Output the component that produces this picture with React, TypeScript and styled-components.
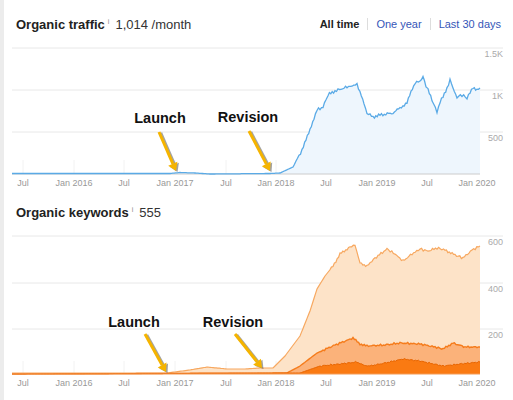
import React from "react";
import styled, { createGlobalStyle } from "styled-components";

const Global = createGlobalStyle`
  body { margin: 0; background: #fff; font-family: "Liberation Sans", Arial, sans-serif; }
`;

const Page = styled.div`
  width: 513px;
  height: 400px;
  overflow: hidden;
  border-left: 4px solid #ececec;
  box-sizing: border-box;
  position: relative;
`;

const Header = styled.div`
  display: flex;
  align-items: center;
  padding: 0 12px 0 12px;
  height: 22px;
  margin-top: ${({ $top }: { $top: number }) => $top}px;
`;

const Title = styled.span`
  font-weight: bold;
  font-size: 13px;
  color: #222;
`;

const Info = styled.span`
  font-size: 7px;
  color: #888;
  margin: -6px 6px 0 3px;
`;

const Value = styled.span`
  font-size: 13px;
  color: #333;
  flex: 1;
`;

const Tabs = styled.div`
  display: flex;
  align-items: center;
  font-size: 11px;
`;

const Tab = styled.span<{ $active?: boolean }>`
  color: ${({ $active }) => ($active ? "#222" : "#3556b8")};
  font-weight: ${({ $active }) => ($active ? "bold" : "normal")};
  padding: 0 8px;
  border-left: ${({ $active }) => ($active ? "none" : "1px solid #ddd")};
  line-height: 12px;
  &:last-child { padding-right: 0; }
`;

const Chart = styled.svg`
  display: block;
`;

const months = ["Jul", "Jan 2016", "Jul", "Jan 2017", "Jul", "Jan 2018", "Jul", "Jan 2019", "Jul", "Jan 2020"];
const mx = [23, 74, 124, 175, 226, 276, 326, 377, 427, 477];

// densify a polyline with a little deterministic noise once the series takes off
const rough = (a: number[][], amp: number, from: number, seed: number) => {
  const out: number[][] = [];
  for (let i = 0; i < a.length - 1; i++) {
    const [x1, y1] = a[i];
    const [x2, y2] = a[i + 1];
    const n = Math.max(1, Math.round((x2 - x1) / 1.5));
    for (let k = 0; k < n; k++) {
      const x = x1 + ((x2 - x1) * k) / n;
      const y = y1 + ((y2 - y1) * k) / n;
      const j = x > from ? amp * (Math.sin(x * 2.3 + seed) * 0.6 + Math.sin(x * 5.1 + seed * 2) * 0.4) : 0;
      out.push([x, +(y + j).toFixed(1)]);
    }
  }
  out.push(a[a.length - 1]);
  return out;
};

const pts = (a: number[][]) => a.map((p) => p.join(",")).join(" ");

const traffic = rough([
  [12, 173.5], [170, 173.5], [180, 172.5], [195, 173], [210, 174], [270, 173.5], [280, 173],
  [293, 167], [302, 150], [306, 140], [310, 130], [314, 118], [317, 110], [323, 107], [326, 100],
  [328, 95], [335, 91], [347, 87], [352, 86], [357, 84], [360, 92], [364, 104], [367, 113],
  [373, 117], [380, 115], [393, 113], [400, 108], [407, 103], [411, 92], [415, 83], [420, 81],
  [423, 77], [426, 86], [428, 90], [432, 100], [437, 112], [440, 102], [443, 97], [447, 88],
  [450, 80], [453, 88], [457, 97], [462, 95], [467, 98], [470, 93], [473, 87], [477, 90], [480, 88],
], 1.6, 295, 1);

const light = rough([
  [12, 377], [167, 377], [190, 374], [207, 371], [227, 373], [245, 373], [260, 372], [273, 372],
  [285, 360], [300, 340], [310, 315], [317, 293], [325, 280], [333, 270], [340, 258], [350, 251],
  [355, 249], [360, 267], [367, 270], [375, 262], [387, 253], [395, 258], [403, 265], [412, 258],
  [420, 253], [428, 255], [437, 252], [445, 254], [455, 259], [463, 262], [472, 254], [480, 250],
], 1.3, 330, 2);

const mid = rough([
  [12, 378], [287, 377], [300, 370], [317, 357], [335, 349], [353, 342], [360, 348], [367, 350],
  [385, 349], [400, 347], [420, 348], [435, 351], [443, 353], [453, 347], [465, 351], [480, 351],
], 1, 320, 3);

const dark = rough([
  [12, 378], [300, 377], [320, 370], [340, 368], [357, 366], [363, 369], [370, 370], [385, 367],
  [403, 363], [420, 365], [443, 370], [460, 368], [480, 366],
], 0.8, 320, 4);

const area = (a: number[][], base: number) =>
  `M${a[0][0]},${base} L${pts(a)} L${a[a.length - 1][0]},${base} Z`;

const Arrow = ({ x1, y1, x2, y2 }: { x1: number; y1: number; x2: number; y2: number }) => {
  const ang = Math.atan2(y2 - y1, x2 - x1);
  const l = 8;
  const w = 5;
  const bx = x2 - l * Math.cos(ang);
  const by = y2 - l * Math.sin(ang);
  const nx = -Math.sin(ang) * w;
  const ny = Math.cos(ang) * w;
  const head = `${x2},${y2} ${bx + nx},${by + ny} ${bx - nx},${by - ny}`;
  return (
    <g>
      <g transform="translate(1.5,1)" opacity="0.45">
        <line x1={x1} y1={y1} x2={bx} y2={by} stroke="#333" strokeWidth="3.5" />
        <polygon points={head} fill="#333" />
      </g>
      <line x1={x1} y1={y1} x2={bx} y2={by} stroke="#f5b400" strokeWidth="3" />
      <polygon points={head} fill="#f5b400" />
    </g>
  );
};

const Label = ({ x, y, children }: { x: number; y: number; children: string }) => (
  <text x={x} y={y} fontSize="14.5" fontWeight="bold" fill="#111" textAnchor="middle"
    fontFamily="Liberation Sans, Arial, sans-serif">{children}</text>
);

const Axis = ({ y, top }: { y: number; top: number }) => (
  <g fontSize="9" fill="#999" fontFamily="Liberation Sans, Arial, sans-serif">
    {mx.map((x, i) => (
      <g key={i}>
        <line x1={x} y1={top} x2={x} y2={y} stroke="#f2f2f2" strokeWidth="1" />
        <text x={x} y={y + 12} textAnchor="middle">{months[i]}</text>
      </g>
    ))}
  </g>
);

const YLabels = ({ items }: { items: [string, number][] }) => (
  <g fontSize="9" fill="#aaa" fontFamily="Liberation Sans, Arial, sans-serif">
    {items.map(([t, y]) => (
      <g key={t}>
        <line x1="12" y1={y} x2="503" y2={y} stroke="#e8e8e8" />
        <text x="503" y={y + 9} textAnchor="end">{t}</text>
      </g>
    ))}
  </g>
);

export default function App() {
  return (
    <Page>
      <Global />
      <Header $top={13}>
        <Title>Organic traffic</Title>
        <Info>i</Info>
        <Value>1,014 /month</Value>
        <Tabs>
          <Tab $active>All time</Tab>
          <Tab>One year</Tab>
          <Tab>Last 30 days</Tab>
        </Tabs>
      </Header>
      <Chart width="509" height="170" viewBox="4 35 509 170">
        <YLabels items={[["1.5K", 48], ["1K", 90], ["500", 132]]} />
        <Axis y={174} top={160} />
        <path d={area(traffic, 174)} fill="#eef6fd" />
        <line x1="12" y1="174" x2="480" y2="174" stroke="#ccc" />
        <polyline points={pts(traffic)} fill="none" stroke="#5aaae6" strokeWidth="1.3" />
        <Label x={160} y={123}>Launch</Label>
        <Arrow x1={159} y1={132} x2={176} y2={171} />
        <Label x={248} y={122}>Revision</Label>
        <Arrow x1={249} y1={131} x2={270} y2={171} />
      </Chart>
      <Header $top={-4}>
        <Title>Organic keywords</Title>
        <Info>i</Info>
        <Value>555</Value>
      </Header>
      <Chart width="509" height="180" viewBox="4 227 509 180">
        <YLabels items={[["600", 240], ["400", 287], ["200", 333]]} />
        <Axis y={378} top={365} />
        <path d={area(light, 378)} fill="#fde3c8" />
        <polyline points={pts(light)} fill="none" stroke="#f7a860" strokeWidth="1.2" />
        <path d={area(mid, 378)} fill="#fbb27a" />
        <polyline points={pts(mid)} fill="none" stroke="#f57c1c" strokeWidth="1.4" />
        <path d={area(dark, 378)} fill="#fa7a12" />
        <polyline points={pts(dark)} fill="none" stroke="#e86500" strokeWidth="1" />
        <line x1="12" y1="378" x2="480" y2="378" stroke="#f39a55" strokeWidth="1.2" />
        <Label x={134} y={331}>Launch</Label>
        <Arrow x1={145} y1={338} x2={166} y2={376} />
        <Label x={233} y={331}>Revision</Label>
        <Arrow x1={235} y1={338} x2={262} y2={372} />
      </Chart>
    </Page>
  );
}
